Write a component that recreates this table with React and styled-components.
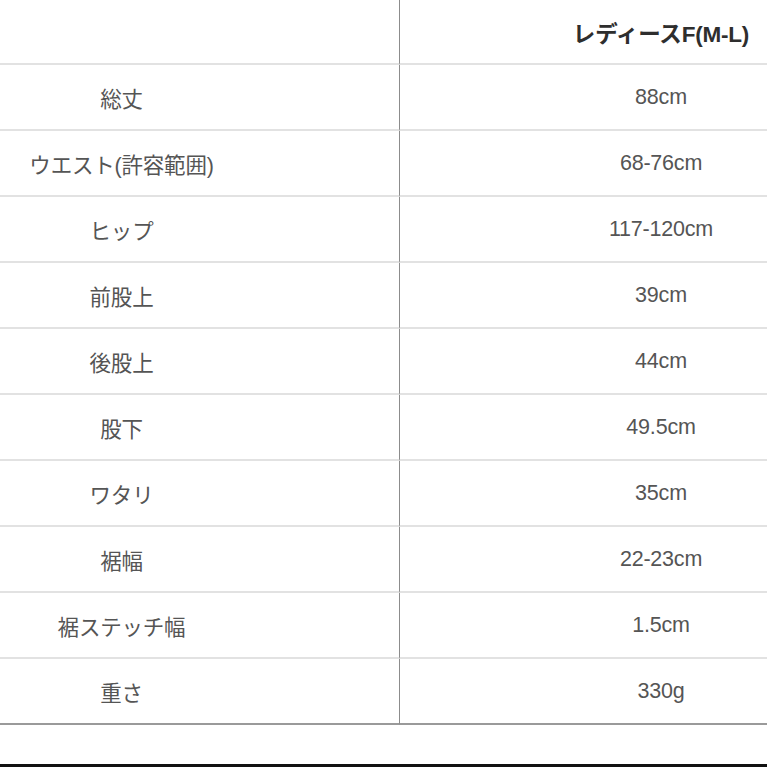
import React from 'react';
import styled, { createGlobalStyle } from 'styled-components';

const GlobalStyle = createGlobalStyle`
  body {
    margin: 0;
    background: #fff;
    font-family: "Liberation Sans", "Noto Sans CJK JP", sans-serif;
    overflow: hidden;
  }
`;

const Table = styled.div`
  display: grid;
  grid-template-columns: 400px 1fr;
  width: 767px;
`;

const Cell = styled.div`
  display: flex;
  align-items: center;
  justify-content: center;
  box-sizing: border-box;
  height: ${p => (p.$head ? 65 : 66)}px;
  border-bottom: 2px solid ${p => (p.$last ? '#9a9a9a' : '#e2e2e2')};
  border-right: ${p => (p.$left ? '1px solid #8c8c8c' : 'none')};
  padding: ${p => (p.$left ? '0 156px 0 0' : '0 0 0 155px')};
  font-size: ${p => (p.$head ? 22.5 : 21.5)}px;
  color: ${p => (p.$head ? '#2e2e2e' : '#555')};
  font-weight: ${p => (p.$head ? 700 : 400)};
  white-space: nowrap;
  letter-spacing: -0.2px;
`;

const Footer = styled.div`
  height: 39px;
  border-bottom: 3px solid #111;
`;

const rows = [
  ['総丈', '88cm'],
  ['ウエスト(許容範囲)', '68-76cm'],
  ['ヒップ', '117-120cm'],
  ['前股上', '39cm'],
  ['後股上', '44cm'],
  ['股下', '49.5cm'],
  ['ワタリ', '35cm'],
  ['裾幅', '22-23cm'],
  ['裾ステッチ幅', '1.5cm'],
  ['重さ', '330g'],
];

const App = () => {
  return (
    <>
      <GlobalStyle />
      <Table>
        <Cell $left $head></Cell>
        <Cell $head>レディースF(M-L)</Cell>
        {rows.map(([label, value], i) => {
          const last = i === rows.length - 1;
          return (
            <React.Fragment key={label}>
              <Cell $left $last={last}>{label}</Cell>
              <Cell $last={last}>{value}</Cell>
            </React.Fragment>
          );
        })}
      </Table>
      <Footer />
    </>
  );
};

export default App;
